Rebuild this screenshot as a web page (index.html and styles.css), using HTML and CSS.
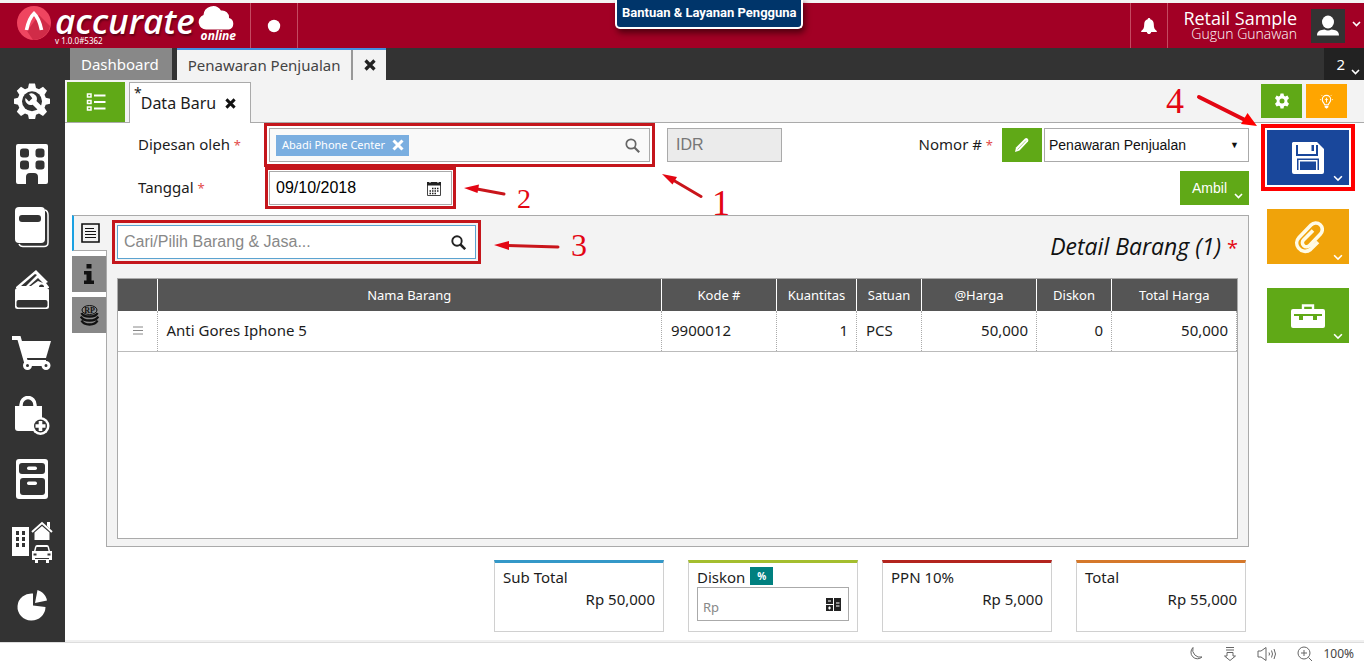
FILE: index.html
```html
<!DOCTYPE html>
<html lang="id">
<head>
<meta charset="utf-8">
<meta name="viewport" content="width=device-width, initial-scale=1">
<title>Accurate Online - Penawaran Penjualan</title>
<link rel="stylesheet" href="styles.css">
</head>
<body>
<header class="topbar">
  <a class="brand" href="#" aria-label="Accurate Online">
    <svg class="brand-mark" width="34" height="34" viewBox="0 0 34 34"><circle cx="17" cy="17" r="17" fill="#ef4560"/><path d="M22 9 33 20A17 17 0 0 1 16 34L10 25Z" fill="#d02c48"/><path d="M9.500 24Q12 12 17 7.500 22 12 24.500 24" fill="none" stroke="#fff" stroke-width="3.600"/></svg>
    <span class="brand-text"><span class="brand-name">accurate</span><span class="version">v 1.0.0#5362</span></span>
    <span class="brand-cloud">
      <svg width="38" height="24" viewBox="0 0 38 24"><path d="M8 23.500a7.500 7.500 0 0 1-2.500-14.500A9.500 9.500 0 0 1 23 4.500 7 7 0 0 1 31 12a6 6 0 0 1 0 11.500Z" fill="#fff"/></svg>
      <span>online</span>
    </span>
  </a>
  <div class="status-dot"><svg width="14" height="14" viewBox="0 0 14 14"><circle cx="7" cy="7" r="6.200" fill="#fff"/></svg></div>
  <a class="help" href="#">Bantuan &amp; Layanan Pengguna</a>
  <div class="account">
    <button class="bell" aria-label="Notifikasi"><svg width="18" height="18" viewBox="0 0 18 18"><path d="M9 1c-.9 0-1.300.6-1.300 1.300C5 3 4.200 5 4.200 7.500c0 3.500-.8 5-3 6.500v1h15.600v-1c-2.200-1.500-3-3-3-6.500 0-2.500-.8-4.500-3.500-5.200C10.300 1.600 9.900 1 9 1ZM6.800 15h4.400c-.3 1.500-1.200 2-2.200 2S7.100 16.500 6.800 15Z" fill="#fff"/></svg></button>
    <div class="who"><span class="company">Retail Sample</span><span class="user">Gugun Gunawan</span></div>
    <button class="avatar" aria-label="Profil"><svg width="24" height="22" viewBox="0 0 24 22"><ellipse cx="12" cy="7" rx="6" ry="6.500" fill="#fff"/><path d="M1 20.500c0-5 4-5.500 7.500-6a7 7 0 0 0 7 0c3.500.5 7.500 1 7.500 6Z" fill="#fff"/></svg></button>
    <svg class="chev" width="9" height="6" viewBox="0 0 9 6"><path d="M1 1l3.500 3.500L8 1" fill="none" stroke="#fff" stroke-width="1.600"/></svg>
  </div>
</header>

<div class="workspace">
  <nav class="sidebar">
    <a href="#" aria-label="Pengaturan"><svg width="36" height="36" viewBox="0 0 36 36"><path d="M15 .5h6l1 4.500 3 1.300 4-2.500 4 4-2.500 4 1.300 3 4.200 1v5l-4.300 1-1.200 3 2.500 4-4 4.200-4-2.500-3 1.300-1 4.700h-6l-1-4.700-3-1.300-4 2.500-4.200-4.200 2.500-4-1.300-3-4-1v-5l4-1 1.300-3-2.500-4 4.200-4 4 2.500L14 5Z" fill="#fff"/><circle cx="18" cy="18.300" r="10" fill="#333"/><path d="M15 11a5.500 5.500 0 0 1 7.500 7l5 5-3.500 4-5.300-5.300A5.500 5.500 0 0 1 11.500 15l3.500 3.500 3.300-3.300Z" fill="#fff"/></svg></a>
    <a href="#" aria-label="Perusahaan"><svg width="34" height="42" viewBox="0 0 34 42"><path d="M3 1h28q2 0 2 2v36q0 2-2 2h-8v-7q0-4-4-4h-4q-4 0-4 4v7H3q-2 0-2-2V3q0-2 2-2Z" fill="#fff"/><g fill="#333"><rect x="5" y="5.500" width="9" height="9" rx="3"/><rect x="20.500" y="5.500" width="9" height="9" rx="3"/><rect x="5" y="17.500" width="9" height="9" rx="3"/><rect x="20.500" y="17.500" width="9" height="9" rx="3"/></g></svg></a>
    <a href="#" aria-label="Buku Besar"><svg width="36" height="42" viewBox="0 0 36 42"><path d="M5 38q1 2.500 4 2.500h21q4 0 4-4V9q0-4-3-5" fill="none" stroke="#fff" stroke-width="1.500"/><rect x="1" y="1" width="30" height="36" rx="4" fill="#fff"/><rect x="5" y="9" width="22" height="7" rx="3" fill="#333"/></svg></a>
    <a href="#" aria-label="Kas dan Bank"><svg width="36" height="42" viewBox="0 0 36 42"><path d="M2 18 22 1l12 12-2 1 3 4v1H2Z" fill="#fff"/><path d="M7 17 21 5l2 1-11 11Zm8 0 9-8 5 5-5-2-7 5Z" fill="#333"/><path d="M25 18q0-2.500 2.500-2.500T30 18Z" fill="#333"/><rect x="1" y="19" width="34" height="21" rx="2.500" fill="#fff"/><rect x="2.500" y="31" width="31" height="7.500" rx="2" fill="#333"/></svg></a>
    <a href="#" aria-label="Penjualan"><svg width="42" height="36" viewBox="0 0 42 36"><path d="M1 3h7l7 24h20" fill="none" stroke="#fff" stroke-width="4"/><path d="M10 6h30l-5 17H15Z" fill="#fff"/><path d="M17 29.500h17" stroke="#fff" stroke-width="3"/><g fill="#333" stroke="#fff" stroke-width="3"><circle cx="16.500" cy="30.500" r="3"/><circle cx="35" cy="30.500" r="3"/></g></svg></a>
    <a href="#" aria-label="Pembelian"><svg width="36" height="40" viewBox="0 0 36 40"><path d="M7 12V9a7 7.500 0 0 1 14 0v3" fill="none" stroke="#fff" stroke-width="3.500"/><path d="M1 10h27v25H4q-3 0-3-3Z" fill="#fff"/><circle cx="26.500" cy="30" r="9" fill="#fff"/><circle cx="26.500" cy="30" r="6.500" fill="#333"/><path d="M26.500 25v10M21.500 30h10" stroke="#fff" stroke-width="3.600"/></svg></a>
    <a href="#" aria-label="Persediaan"><svg width="34" height="42" viewBox="0 0 34 42"><rect x="1" y="1" width="32" height="40" rx="3" fill="#fff"/><g fill="#333"><rect x="4" y="5" width="26" height="11" rx="3"/><rect x="5" y="20" width="25" height="17" rx="3"/></g><rect x="12" y="8.500" width="10" height="3.500" rx="1.700" fill="#fff"/><rect x="12" y="23.500" width="10" height="3.500" rx="1.700" fill="#fff"/></svg></a>
    <a href="#" aria-label="Aset Tetap"><svg width="42" height="42" viewBox="0 0 42 42"><rect x="1" y="6" width="17" height="29" fill="#fff"/><g fill="#333"><path d="M5 10h3v4H5zM11 10h3v4h-3zM5 16h3v4H5zM11 16h3v4h-3zM5 22h3v4H5zM11 22h3v4h-3z"/></g><path d="M21 11 31 2l10 9" fill="none" stroke="#fff" stroke-width="2"/><path d="M36 1h3v7l-3-3ZM23.500 11.500 31 5l7.500 6.500V19h-15Z" fill="#fff"/><path d="M24 26q.5-2 2-2h10q1.500 0 2 2l1 4h2v9h-3v3h-3v-3h-8v3h-3v-3h-3v-9h2Z" fill="#fff"/><path d="M25.500 26h11l1 4h-13ZM22.500 32.500h3v2h-3zM36.500 32.500h3v2h-3zM24 37h14v1H24z" fill="#333"/></svg></a>
    <a href="#" aria-label="Laporan"><svg width="32" height="32" viewBox="0 0 32 32"><path d="M17 4.500v12l12.500 1.500A14 13.500 0 1 1 17 4.500Z" fill="#fff"/><path d="m21.500 1-2.500 13 12-2.500C30 6 26 2.500 21.500 1Z" fill="#fff"/></svg></a>
  </nav>

  <main class="main">
    <div class="tabs">
      <a class="tab" href="#">Dashboard</a>
      <div class="tab tab-active"><a href="#">Penawaran Penjualan</a><button class="tab-close" aria-label="Tutup tab"><svg width="12" height="12" viewBox="0 0 12 12"><path d="m1.500 1.500 9 9m0-9-9 9" stroke="#222" stroke-width="3.200"/></svg></button></div>
      <button class="tab-count">2<svg width="9" height="6" viewBox="0 0 9 6"><path d="M1 1l3.500 3.500L8 1" fill="none" stroke="#fff" stroke-width="1.600"/></svg></button>
    </div>

    <div class="subtabs">
      <button class="list-button" aria-label="Daftar"><svg width="20" height="20" viewBox="0 0 20 20"><g fill="none" stroke="#fff" stroke-width="1.500"><path d="M1.500 2h3.500v3H1.500zM1.500 8.500h3.500v3H1.500zM1.500 15h3.500v3H1.500z"/></g><path d="M8 3.500h11.500M8 10h11.500M8 16.500h11.500" stroke="#fff" stroke-width="2"/></svg></button>
      <div class="subtab"><sup>*</sup><span>Data Baru</span><button class="tab-close" aria-label="Tutup data"><svg width="11" height="11" viewBox="0 0 12 12"><path d="m1.500 1.500 9 9m0-9-9 9" stroke="#111" stroke-width="3.200"/></svg></button></div>
      <div class="subtab-tools">
        <button class="tool green" aria-label="Atur"><svg width="16" height="16" viewBox="0 0 16 16"><path d="M6.500.5h3l.5 2.300 1.200.6 2.200-.9 1.600 2.700L13.300 7v2l1.700 1.800-1.600 2.700-2.200-.8-1.200.6-.5 2.200h-3L6 13.300l-1.200-.6-2.200.8L1 10.800 2.700 9V7L1 5.200l1.600-2.700 2.200.9L6 2.800ZM8 5.500a2.500 2.500 0 1 0 0 5 2.500 2.500 0 0 0 0-5Z" fill="#fff" fill-rule="evenodd"/></svg></button>
        <button class="tool orange" aria-label="Petunjuk"><svg width="15" height="15" viewBox="0 0 16 16"><path d="M6 11.500C6 9.500 3.500 9 3.500 6a4.500 4.500 0 0 1 9 0c0 3-2.500 3.500-2.500 5.500Z" fill="none" stroke="#fff" stroke-width="1.200"/><path d="M8 4v5M6.500 5.500 8 7l1.500-1.500M1 6h1M14 6h1M2.500 1l.8.800M13.500 1l-.8.800" stroke="#fff" fill="none"/><path d="M6 12.500h4v1.500l-2 1.800L6 14Z" fill="#fff"/></svg></button>
      </div>
    </div>

    <div class="page">
      <div class="document">
        <form class="form">
          <div class="form-row">
            <label for="customer">Dipesan oleh <i>*</i></label>
            <div class="field customer marked">
              <span class="chip">Abadi Phone Center<button type="button" aria-label="Hapus"><svg width="12" height="12" viewBox="0 0 12 12"><path d="m1.500 1.500 9 9m0-9-9 9" stroke="#fff" stroke-width="3"/></svg></button></span>
              <input id="customer" type="text">
              <svg width="15" height="15" viewBox="0 0 15 15"><circle cx="6" cy="6" r="4.700" fill="none" stroke="#666" stroke-width="1.700"/><path d="m9.500 9.500 4.700 4.700" stroke="#666" stroke-width="2.200"/></svg>
              <div class="note note-1"><svg width="42" height="26" viewBox="0 0 42 26"><path d="m12 7 28 16.500" stroke="#c9151b" stroke-width="3" stroke-linecap="round"/><path d="m1 1 15 3-4.500 7.500Z" fill="#e30613"/></svg><span>1</span></div>
            </div>
            <input class="currency" type="text" placeholder="IDR" aria-label="Mata uang" disabled>
            <div class="row-end">
              <label for="number">Nomor # <i>*</i></label>
              <button type="button" class="edit green" aria-label="Ubah nomor"><svg width="16" height="16" viewBox="0 0 16 16"><path d="M2 10.500 11 1.500q1.500-1 2.700.3t.3 2.700L5.500 13.500 1 15Z" fill="#fff"/><path d="m3.500 12.500 8.500-9" stroke="#a9d77e" stroke-width="1"/></svg></button>
              <div class="select"><select id="number"><option>Penawaran Penjualan</option></select><span>▼</span></div>
            </div>
          </div>
          <div class="form-row">
            <label for="date">Tanggal <i>*</i></label>
            <div class="field date marked">
              <input id="date" type="text" value="09/10/2018">
              <svg width="14" height="15" viewBox="0 0 14 15"><path d="M.5 1.500h13v13H.5Z" fill="none" stroke="#444"/><path d="M0 1h14v3.500H0Z" fill="#222"/><path d="M3 0v2M11 0v2" stroke="#fff"/><path d="M5 7.500h7M2.500 10h9M2.500 12.500h7" stroke="#222" stroke-width="1.500" stroke-dasharray="1.500 1"/></svg>
              <div class="note note-2"><svg width="42" height="14" viewBox="0 0 42 14"><path d="m13 5 27 5" stroke="#c9151b" stroke-width="3" stroke-linecap="round"/><path d="M0 4 15 .5 13.500 9Z" fill="#e30613"/></svg><span>2</span></div>
            </div>
            <div class="row-end"><button type="button" class="fetch green">Ambil<svg width="9" height="6" viewBox="0 0 9 6"><path d="M1 1l3.500 3.500L8 1" fill="none" stroke="#fff" stroke-width="1.600"/></svg></button></div>
          </div>
        </form>

        <section class="details">
          <div class="side-tabs">
            <button class="side-tab side-active" aria-label="Rincian"><svg width="19" height="20" viewBox="0 0 19 20"><path d="M1 1h17v18H1Z" fill="none" stroke="#111" stroke-width="1.600"/><path d="M4 5.500h9M4 8.500h11M4 11.500h11M4 14.500h11" stroke="#111" stroke-width="1"/></svg></button>
            <button class="side-tab" aria-label="Info"><svg width="10" height="20" viewBox="0 0 10 20"><path d="M2.500 0h5v4.500h-5zM0 7h7.500v9.500H10V20H0v-3.500h2.500v-6H0Z" fill="#111"/></svg></button>
            <button class="side-tab" aria-label="Biaya"><svg width="19" height="21" viewBox="0 0 19 21"><ellipse cx="9.500" cy="5" rx="7.500" ry="4.500" fill="#888" stroke="#111" stroke-width="1"/><text x="9.500" y="8" text-anchor="middle" class="coin">RP</text><g fill="none" stroke="#111" stroke-width="2.300"><path d="M1.500 8q1.500 3.500 8 3.500T17.500 8M.8 11.500q2 4 8.700 4t8.700-4M1.500 15.500q2 4 8 4t8-4"/></g></svg></button>
          </div>
          <div class="panel">
            <div class="panel-head">
              <div class="field search marked">
                <input type="text" placeholder="Cari/Pilih Barang &amp; Jasa..." aria-label="Cari/Pilih Barang &amp; Jasa">
                <svg width="15" height="15" viewBox="0 0 15 15"><circle cx="6" cy="6" r="4.700" fill="none" stroke="#222" stroke-width="1.900"/><path d="m9.500 9.500 4.700 4.700" stroke="#222" stroke-width="2.500"/></svg>
                <div class="note note-3"><svg width="66" height="12" viewBox="0 0 66 12"><path d="m14 5.500 50 1.500" stroke="#c9151b" stroke-width="3" stroke-linecap="round"/><path d="m0 5 15-4v9Z" fill="#e30613"/></svg><span>3</span></div>
              </div>
              <h2>Detail Barang (1) <b>*</b></h2>
            </div>
            <div class="table-box">
              <table>
                <colgroup><col class="c-grip"><col><col class="c-code"><col class="c-qty"><col class="c-unit"><col class="c-code"><col class="c-disc"><col class="c-total"></colgroup>
                <thead><tr><th></th><th>Nama Barang</th><th>Kode #</th><th>Kuantitas</th><th>Satuan</th><th>@Harga</th><th>Diskon</th><th>Total Harga</th></tr></thead>
                <tbody><tr><td class="grip"><svg width="10" height="9" viewBox="0 0 10 9"><path d="M0 1h10M0 4.500h10M0 8h10" stroke="#888"/></svg></td><td>Anti Gores Iphone 5</td><td>9900012</td><td class="num">1</td><td>PCS</td><td class="num">50,000</td><td class="num">0</td><td class="num">50,000</td></tr></tbody>
              </table>
            </div>
          </div>
        </section>

        <section class="totals">
          <div class="card blue"><span>Sub Total</span><strong>Rp 50,000</strong></div>
          <div class="card lime"><div class="card-label"><label for="discount">Diskon</label><button class="percent">%</button></div><div class="field discount"><input id="discount" type="text" placeholder="Rp"><svg width="15" height="15" viewBox="0 0 15 15"><path d="M0 1h7v6H0zM0 8h7v6H0zM8 1h7v13H8z" fill="#222"/><path d="M2 4h3M2 11h3M3.500 9.500v3M10 6h3.500M10 9h3.500" stroke="#fff" stroke-width="1.200"/></svg></div></div>
          <div class="card red"><span>PPN 10%</span><strong>Rp 5,000</strong></div>
          <div class="card amber"><span>Total</span><strong>Rp 55,000</strong></div>
        </section>
      </div>

      <aside class="actions">
        <button class="action save" aria-label="Simpan">
          <svg width="34" height="34" viewBox="0 0 34 34"><path d="M2 1h24l7 7v23q0 2-2 2H3q-2 0-2-2V2Z" fill="#fff"/><path d="M5 4h2v9h18V4h2v11H5Z" fill="#19479b"/><path d="M20.500 4h2.500v6h-2.500zM6 17.500h22V29H6z" fill="#19479b"/><path d="M7.500 19h19v10h-19z" fill="#fff"/><path d="M9 20.500h16V29H9z" fill="#19479b"/></svg>
          <svg class="caret" width="10" height="7" viewBox="0 0 9 6"><path d="M1 1l3.500 3.500L8 1" fill="none" stroke="#fff" stroke-width="1.400"/></svg>
        </button>
        <div class="note note-4"><span>4</span><svg width="62" height="34" viewBox="0 0 62 34"><path d="m3 3 45 22.500" stroke="#e30613" stroke-width="4" stroke-linecap="round"/><path d="M61 32 45 30l6.500-11Z" fill="#f00"/></svg></div>
        <button class="action attach" aria-label="Lampiran">
          <svg width="32" height="34" viewBox="0 0 32 34"><path d="m26 22-7.500 7.500a8.500 8.500 0 0 1-12-1.500 8 8 0 0 1 .5-10.500L19 5a6.500 6.500 0 0 1 9.500 9L17.500 25.500a4 4 0 0 1-6-5.500L21 10.500" fill="none" stroke="#fffbe6" stroke-width="3.600"/></svg>
          <svg class="caret" width="10" height="7" viewBox="0 0 9 6"><path d="M1 1l3.500 3.500L8 1" fill="none" stroke="#fff" stroke-width="1.400"/></svg>
        </button>
        <button class="action green" aria-label="Lainnya">
          <svg width="34" height="26" viewBox="0 0 34 26"><path d="M12 6V2.500h10V6" fill="none" stroke="#fff" stroke-width="2.400"/><rect y="6" width="34" height="19" rx="2" fill="#fff"/><path d="M3 11h28v2h-5v4h-4v-4H12v4H8v-4H3Z" fill="#60a917"/></svg>
          <svg class="caret" width="10" height="7" viewBox="0 0 9 6"><path d="M1 1l3.500 3.500L8 1" fill="none" stroke="#fff" stroke-width="1.400"/></svg>
        </button>
      </aside>
    </div>
  </main>
</div>

<footer class="statusbar">
  <svg width="15" height="16" viewBox="0 0 15 16"><path d="M5 1.500a6.500 6.500 0 1 0 9 9.500A7.500 7.500 0 0 1 5 1.500Z" fill="none" stroke="#666"/></svg>
  <svg width="14" height="16" viewBox="0 0 14 16"><path d="M3 1.500h8M3 4h8M4 6.500h6V10h2.500L7 14.500 1.500 10H4Z" fill="none" stroke="#666"/></svg>
  <svg width="20" height="16" viewBox="0 0 20 16"><path d="M1 5h3l5-3.500v13L4 11H1ZM12 6.500q1 1.500 0 3M14.500 4.500q2 3.500 0 7M17 3q3 5 0 10" fill="none" stroke="#666"/></svg>
  <svg width="16" height="16" viewBox="0 0 16 16"><circle cx="7" cy="7" r="6" fill="none" stroke="#666"/><path d="M4 7h6M7 4v6M11.500 11.500l3.500 3.500" stroke="#666"/></svg>
  <span>100%</span>
</footer>
</body>
</html>
```

FILE: styles.css
```css
* { box-sizing: border-box; }
body { margin: 0; min-height: 100vh; display: flex; flex-direction: column; background: #fff; color: #1c1c1c; font-family: "Noto Sans", "Open Sans", sans-serif; font-size: 15px; line-height: 20px; }
button, input, select { font: inherit; margin: 0; padding: 0; border: 0; border-radius: 0; }
button { color: #fff; cursor: pointer; background: none; }
a { color: inherit; text-decoration: none; }
svg { display: block; flex: none; }
.green { background: #60a917; }
.orange { background: #ffa500; }

/* Top bar */
.topbar { position: relative; display: flex; height: 48px; border-top: 3px solid #f4f4f4; background: #a20025; color: #fff; }
.brand { display: flex; width: 251px; padding: 3px 0 0 17px; border-right: 1px solid #c54a62; }
.brand-text { display: flex; flex-direction: column; width: 147px; padding-left: 4px; }
.brand-name { font-family: "Open Sans", sans-serif; font-style: italic; font-weight: 600; font-size: 35px; line-height: 30px; text-shadow: 1px 2px 2px #600016; }
.version { font-size: 8px; line-height: 10px; }
.brand-cloud { display: flex; flex-direction: column; align-items: flex-end; }
.brand-cloud span { font-style: italic; font-weight: 700; font-size: 12px; line-height: 12px; }
.status-dot { display: flex; align-items: center; justify-content: center; width: 47px; border-right: 1px solid #c54a62; }
.help { position: absolute; top: -3px; left: 50%; margin-left: -67px; padding: 5px 4px 6px 5px; border: 2px solid #fff; border-top: 0; border-radius: 0 0 5px 5px; background: #00356a; box-shadow: 2px 4px 6px #50000f; font: 700 13px/16px Roboto, sans-serif; white-space: nowrap; }
.account { display: flex; align-items: center; margin-left: auto; padding-right: 3px; }
.bell { display: flex; align-items: center; justify-content: center; width: 38px; height: 100%; border: solid #c54a62; border-width: 0 1px; }
.who { display: flex; flex-direction: column; align-items: flex-end; padding: 0 14px 2px 15px; font-family: "Open Sans", sans-serif; }
.company { font-size: 18px; line-height: 18px; font-weight: 500; }
.user { font-size: 14px; line-height: 14px; font-weight: 300; }
.avatar { display: flex; align-items: center; justify-content: center; width: 34px; height: 34px; background: #333; }
.chev { margin: 0 0 4px 7px; }

/* Workspace */
.workspace { flex: 1; display: flex; }
.sidebar { width: 65px; padding: 21px 1px 0 0; background: #333; }
.sidebar a { display: flex; align-items: center; justify-content: center; height: 63px; }
.main { flex: 1; min-width: 0; display: flex; flex-direction: column; }
.tabs { display: flex; height: 32px; padding-left: 5px; background: #333; }
.tab { display: flex; align-items: center; margin-right: 5px; padding: 0 13px 0 11px; background: #888; color: #fff; }
.tab-active { padding: 0; border-top: 2px solid #4390df; background: #f3f3f3; color: #444; }
.tab-active a { padding: 0 11px; }
.tab-close { display: flex; align-items: center; justify-content: center; }
.tab-active .tab-close { width: 35px; height: 100%; border-left: 2px solid #999; }
.tab-count { display: flex; align-items: center; gap: 6px; margin-left: auto; padding: 0 4px 0 12px; background: #222; }
.tab-count svg { margin-top: 16px; }

.subtabs { display: flex; height: 43px; padding: 2px 17px 0 2px; border-bottom: 1px solid #aaa; background: #f3f3f3; }
.list-button { display: flex; align-items: center; justify-content: center; width: 58px; height: 40px; background: #60a917; }
.subtab { display: flex; align-items: center; gap: 9px; height: 41px; margin-left: 4px; padding: 0 14px 0 4px; border: 1px solid #aaa; border-bottom: 0; background: #fff; font-size: 16px; }
.subtab sup { align-self: flex-start; margin-right: -10px; font-size: 14px; line-height: 20px; }
.subtab-tools { display: flex; gap: 4px; margin: 2px 0 0 auto; }
.tool { display: flex; align-items: center; justify-content: center; width: 41px; height: 34px; }

.page { flex: 1; display: flex; gap: 18px; padding: 5px 15px 8px 0; border-bottom: 2px solid #f0f0f0; }
.document { flex: 1; min-width: 0; display: flex; flex-direction: column; }

/* Form */
.form { padding-left: 73px; }
.form-row { display: flex; height: 34px; margin-bottom: 9px; }
.form-row > label { width: 131px; line-height: 32px; }
label i, h2 b { color: #e34b4b; font-style: normal; font-size: 13px; }
.field { position: relative; display: flex; align-items: center; height: 34px; padding: 0 12px 0 6px; border: 1px solid #aaa; background: #fff; }
.field input { flex: 1; min-width: 0; height: 100%; outline: 0; background: transparent; font-family: "Liberation Sans", sans-serif; font-size: 16px; }
input::placeholder { color: #888; opacity: 1; }
.marked { outline: 3px solid #c4161c; outline-offset: 2px; }
.customer { width: 381px; padding: 0 9px 0 6px; background: #f9f9f9; }
.chip { display: flex; align-items: center; gap: 7px; height: 21px; padding: 0 5px 0 6px; background: #7aaee0; color: #fff; font-size: 11px; }
.currency { width: 115px; margin-left: 17px; padding: 0 8px; border: 1px solid #aaa; background: #ebebeb; font-family: "Liberation Sans", sans-serif; font-size: 16px; }
.currency::placeholder { color: #777; }
.row-end { display: flex; margin-left: auto; }
.row-end label { padding-right: 9px; line-height: 32px; }
.edit { display: flex; align-items: center; justify-content: center; width: 40px; margin-right: 2px; }
.select { position: relative; width: 205px; border: 1px solid #aaa; }
.select select { width: 100%; height: 100%; padding: 0 4px; appearance: none; background: #fff; color: #111; font-family: "Liberation Sans", sans-serif; font-size: 14px; }
.select span { position: absolute; top: 0; right: 9px; color: #111; font-size: 9px; line-height: 32px; pointer-events: none; }
.date { width: 183px; padding-right: 10px; outline-offset: 1px; }
.fetch { display: flex; align-items: center; gap: 7px; width: 69px; padding-left: 12px; font-family: "Liberation Sans", sans-serif; font-size: 14px; }
.fetch svg { margin-top: 16px; }

/* Callouts */
.note { position: absolute; display: flex; pointer-events: none; color: #e30613; font-family: "Liberation Serif", serif; }
.note-1 { left: 391px; top: 44px; gap: 9px; font-size: 36px; line-height: 60px; }
.note-2 { left: 194px; top: 12px; gap: 11px; font-size: 28px; line-height: 30px; }
.note-3 { left: 376px; top: 14px; gap: 11px; font-size: 32px; line-height: 10px; }
.note-4 { right: 91px; top: -34px; gap: 12px; font-size: 36px; line-height: 14px; }

/* Item details */
.details { flex: 1; display: flex; padding-left: 7px; margin-top: 1px; }
.side-tabs { z-index: 1; display: flex; flex-direction: column; gap: 5px; width: 35px; margin-right: -1px; }
.side-tab { display: flex; align-items: center; justify-content: center; height: 36px; margin-right: 1px; background: #888; }
.side-active { margin-right: 0; border: 1px solid #aaa; border-width: 1px 0; border-left: 2px solid #1ba1e2; background: #f3f3f3; }
.coin { font: 700 8px "Liberation Serif", serif; fill: #111; }
.panel { flex: 1; min-width: 0; display: flex; flex-direction: column; padding: 9px 10px 7px; border: 1px solid #aaa; background: #f3f3f3; }
.panel-head { display: flex; align-items: flex-start; justify-content: space-between; margin-bottom: 17px; }
.search { width: 359px; padding-right: 9px; border-color: #5ba3d0; }
h2 { margin: 8px 0 0; color: #111; font-family: "Open Sans", sans-serif; font-style: italic; font-weight: 400; font-size: 23px; line-height: 26px; }
h2 b { color: #e30613; font-weight: 400; font-size: 20px; }
.table-box { flex: 1; border: 1px solid #aaa; background: #fff; }
table { width: 100%; table-layout: fixed; border-collapse: collapse; }
th { height: 32px; padding: 0; border-left: 1px solid #fff; background: #555; color: #fff; font-weight: 400; font-size: 13px; }
th:first-child { border-left: 0; }
td { height: 40px; padding: 0 8px 1px 9px; border-bottom: 1px solid #bbb; border-right: 1px dotted #aaa; font-size: 15px; }
.num { text-align: right; }
.grip { padding: 0 15px; }
.c-grip { width: 39px; }
.c-code { width: 115px; }
.c-qty { width: 80px; }
.c-unit { width: 65px; }
.c-disc { width: 75px; }
.c-total { width: 125px; }

/* Totals */
.totals { display: flex; justify-content: flex-end; gap: 24px; padding: 13px 3px 0 0; }
.card { display: flex; flex-direction: column; width: 170px; height: 72px; padding: 4px 8px 0; border: 1px solid #d0d0d0; border-top: 3px solid; font-size: 15px; }
.card strong { align-self: flex-end; font-weight: 400; line-height: 24px; }
.blue { border-top-color: #3498c8; }
.lime { border-top-color: #a4be2e; }
.red { border-top-color: #b3241e; }
.amber { border-top-color: #d5782a; }
.card-label { display: flex; gap: 5px; }
.percent { width: 23px; height: 18px; background: #00807f; font-size: 10px; font-weight: 700; line-height: 18px; }
.discount { height: 34px; padding: 0 7px 0 5px; }
.discount input { padding-top: 6px; font-family: "Noto Sans", sans-serif; font-size: 13px; }

/* Actions */
.actions { position: relative; display: flex; flex-direction: column; gap: 24px; width: 82px; padding-top: 2px; }
.action { position: relative; display: flex; align-items: center; justify-content: center; height: 55px; }
.save { background: #19479b; outline: 4px solid #f00; outline-offset: 2px; }
.attach { background: #f0a30a; }
.caret { position: absolute; right: 6px; bottom: 3px; }

.statusbar { display: flex; align-items: center; justify-content: flex-end; gap: 20px; height: 20px; padding: 3px 10px 0 0; border-top: 1px solid #ddd; color: #444; font-size: 12px; }
.statusbar span { margin-left: -10px; }
```
